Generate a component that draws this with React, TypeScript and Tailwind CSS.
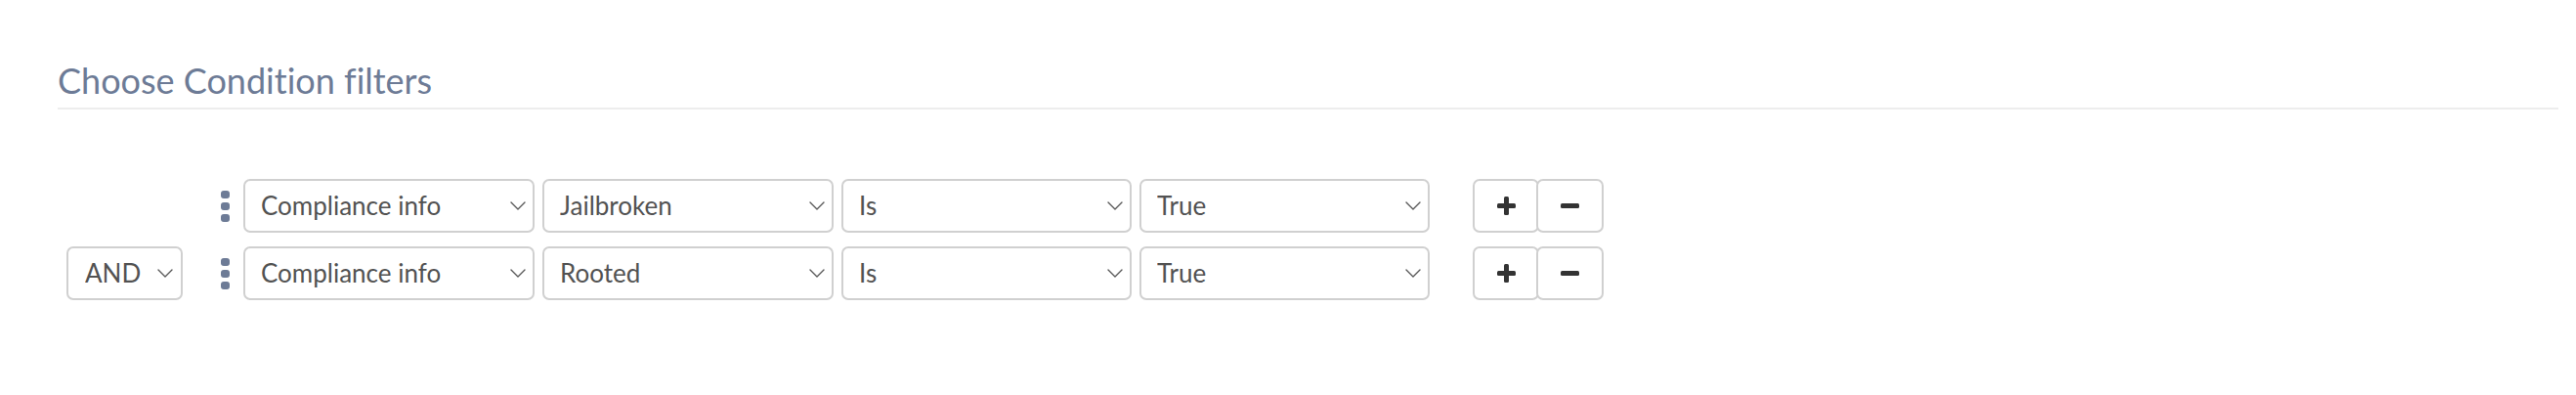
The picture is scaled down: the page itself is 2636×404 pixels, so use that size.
import React from 'react'

interface Condition {
  join?: string;
  category: string;
  field: string;
  operator: string;
  value: string;
}

const conditions: Condition[] = [
  {category: "Compliance info", field: "Jailbroken", operator: "Is", value: "True"},
  {join: "AND", category: "Compliance info", field: "Rooted", operator: "Is", value: "True"},
]

const Chevron = () => (
  <svg width="16" height="9" viewBox="0 0 16 9" fill="none" className="flex-none">
    <polyline points="1,1 8,8 15,1" stroke="#5a5a5a" strokeWidth="1.4" strokeLinecap="round" strokeLinejoin="round" />
  </svg>
)

const Select = (props: {value: string; className?: string}) => (
  <button className={`h-full flex items-center justify-between border-2 border-[#d0d0d0] rounded-[7px] bg-white pl-[16px] pr-[7px] text-[26px] text-[#525252] ${props.className ?? ""}`}>
    <span className="truncate">{props.value}</span>
    <Chevron />
  </button>
)

const DragHandle = () => (
  <div className="w-[9px] flex flex-col gap-[4px] flex-none cursor-move">
    <div className="h-[8px] rounded-[3px] bg-[#6d7b96]" />
    <div className="h-[8px] rounded-[3px] bg-[#6d7b96]" />
    <div className="h-[8px] rounded-[3px] bg-[#6d7b96]" />
  </div>
)

const ConditionRow = ({c}: {c: Condition}) => (
  <div className="flex items-center h-[55px]">
    <div className="w-[119px] h-full flex-none">
      {c.join && <Select value={c.join} className="w-full pl-[17px] pr-[8px]" />}
    </div>
    <div className="ml-[39px]">
      <DragHandle />
    </div>
    <div className="ml-[14px] h-full flex gap-[8px]">
      <Select value={c.category} className="w-[298px]" />
      <Select value={c.field} className="w-[298px]" />
      <Select value={c.operator} className="w-[297px]" />
      <Select value={c.value} className="w-[297px]" />
    </div>
    <div className="ml-[44px] h-full flex">
      <button className="w-[68px] h-full flex items-center justify-center border-2 border-[#d0d0d0] rounded-[7px] bg-white">
        <svg width="19" height="19" viewBox="0 0 19 19">
          <rect x="0" y="7" width="19" height="5" rx="1.5" fill="#333" />
          <rect x="7" y="0" width="5" height="19" rx="1.5" fill="#333" />
        </svg>
      </button>
      <button className="-ml-[3px] w-[69px] h-full flex items-center justify-center border-2 border-[#d0d0d0] rounded-[7px] bg-white">
        <svg width="19" height="5" viewBox="0 0 19 5">
          <rect x="0" y="0" width="19" height="5" rx="1.5" fill="#333" />
        </svg>
      </button>
    </div>
  </div>
)

export default function App() {
  return (
    <div className="w-full min-h-[404px] bg-white font-['Lato','Open_Sans',sans-serif] [font-variant-ligatures:none]">
      <div className="pl-[59px] pr-[18px] pt-[64px]">
        <h2 className="text-[36px] leading-[36px] font-normal text-[#6d7b96]">Choose Condition filters</h2>
        <div className="mt-[10px] h-[2px] bg-[#ededed]" />
      </div>
      <div className="pl-[68px] pt-[71px] flex flex-col gap-[14px]">
        {conditions.map((c, i) => <ConditionRow key={i} c={c} />)}
      </div>
    </div>
  )
}
